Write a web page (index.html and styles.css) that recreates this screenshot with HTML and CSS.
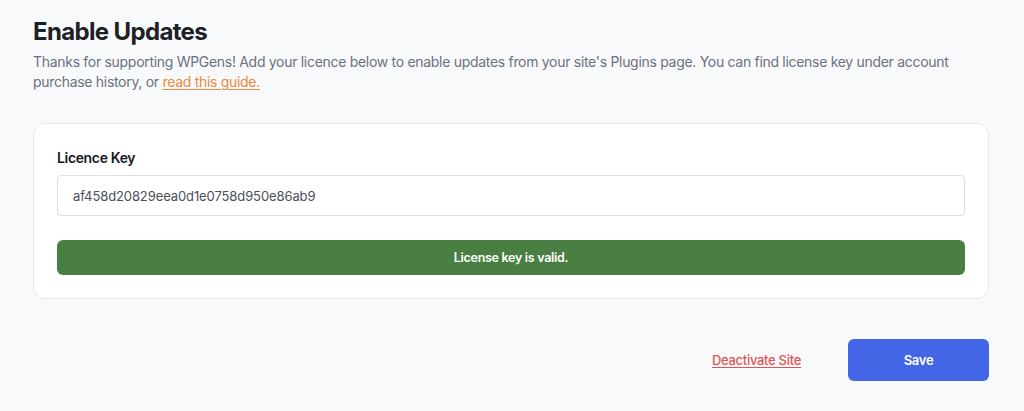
FILE: index.html
```html
<!DOCTYPE html>
<html lang="en">
<head>
<meta charset="utf-8">
<title>Enable Updates</title>
<link rel="stylesheet" href="styles.css">
</head>
<body>
<main class="page">
  <h1 class="title">Enable Updates</h1>
  <p class="desc">Thanks for supporting WPGens! Add your licence below to enable updates from your site's Plugins page. You can find license key under account purchase history, or <a class="guide" href="#">read this guide.</a></p>
  <section class="card">
    <label class="label" for="key">Licence Key</label>
    <input class="input" id="key" type="text" value="af458d20829eea0d1e0758d950e86ab9">
    <div class="status">License key is valid.</div>
  </section>
  <div class="actions">
    <a class="deactivate" href="#">Deactivate Site</a>
    <button class="save" type="button">Save</button>
  </div>
</main>
</body>
</html>
```

FILE: styles.css
```css
* { box-sizing: border-box; }
html, body { margin: 0; padding: 0; }
body {
  background: #f8f9fb;
  font-family: Inter, "Noto Sans", "Liberation Sans", sans-serif;
  color: #1f2328;
}
.page {
  padding: 16px 35px 0 33px;
}
.title {
  margin: 0;
  font-size: 24px;
  line-height: 32px;
  font-weight: 700;
  color: #1d2025;
  letter-spacing: -0.65px;
}
.desc {
  margin: 4px 0 0;
  font-size: 14px;
  line-height: 20px;
  color: #6b7280;
  letter-spacing: -0.3px;
  max-width: 940px;
}
.guide {
  color: #ea8a3c;
  text-decoration: underline;
  text-underline-offset: 2px;
}
.card {
  margin-top: 31px;
  background: #fff;
  border: 1px solid #e6e8eb;
  border-radius: 12px;
  padding: 24px 23px 23px;
  display: flex;
  flex-direction: column;
}
.label {
  font-size: 14px;
  line-height: 20px;
  font-weight: 600;
  color: #15181c;
  letter-spacing: -0.35px;
  margin-bottom: 7px;
}
.input {
  height: 41px;
  border: 1px solid #dcdfe3;
  border-radius: 4px;
  padding: 0 15px;
  font-family: inherit;
  font-size: 13px;
  letter-spacing: -0.1px;
  color: #4b5058;
  background: #fff;
  outline: none;
}
.status {
  margin-top: 24px;
  height: 35px;
  border-radius: 6px;
  background: #4a7f44;
  color: #fff;
  font-size: 12.5px;
  font-weight: 600;
  letter-spacing: -0.3px;
  display: flex;
  align-items: center;
  justify-content: center;
}
.actions {
  margin-top: 40px;
  display: flex;
  justify-content: flex-end;
  align-items: center;
  gap: 47px;
}
.deactivate {
  color: #e05656;
  font-size: 13px;
  font-weight: 500;
  letter-spacing: -0.3px;
  text-decoration: underline;
  text-underline-offset: 2px;
}
.save {
  width: 141px;
  height: 42px;
  border: none;
  border-radius: 6px;
  background: #4366e6;
  color: #fff;
  font-family: inherit;
  font-size: 13px;
  font-weight: 600;
  letter-spacing: -0.3px;
}
```
